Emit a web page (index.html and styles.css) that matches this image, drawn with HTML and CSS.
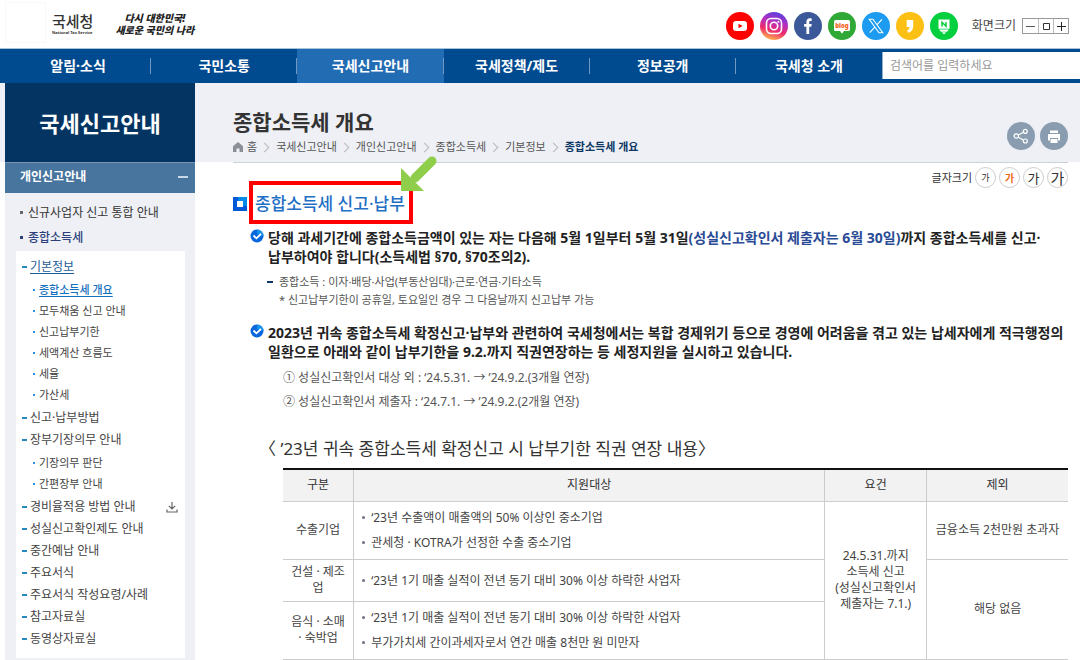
FILE: index.html
```html
<!DOCTYPE html>
<html lang="ko">
<head>
<meta charset="utf-8">
<meta name="viewport" content="width=device-width, initial-scale=1">
<title>종합소득세 개요 | 국세청</title>
<link rel="stylesheet" href="styles.css">
</head>
<body>
<header class="top">
  <a class="brand" href="#">
    <span class="emblem"></span>
    <span class="brand-text"><span class="brand-name">국세청</span><span class="brand-sub">National Tax Service</span></span>
  </a>
  <p class="slogan"><span class="slogan-first">다시 대한민국!</span><span>새로운 국민의 나라</span></p>
  <div class="social">
    <a href="#" aria-label="YouTube"><svg viewBox="0 0 28 28"><circle cx="14" cy="14" r="14" fill="#f00"/><rect x="7" y="9" width="14" height="10" rx="3" fill="#fff"/><path d="M12.5 11.7l4.2 2.3-4.2 2.3z" fill="#f00"/></svg></a>
    <a href="#" aria-label="Instagram"><svg viewBox="0 0 28 28"><defs><linearGradient id="ig" x1="0.6" y1="0" x2="0.3" y2="1"><stop offset="0" stop-color="#5a3fe0"/><stop offset=".35" stop-color="#b72fbe"/><stop offset=".65" stop-color="#ee2c6b"/><stop offset="1" stop-color="#fdc04e"/></linearGradient></defs><circle cx="14" cy="14" r="14" fill="url(#ig)"/><rect x="6.5" y="6.5" width="15" height="15" rx="4.5" fill="none" stroke="#fff" stroke-width="1.6"/><circle cx="14" cy="14" r="3.7" fill="none" stroke="#fff" stroke-width="1.6"/><circle cx="18.4" cy="9.7" r="1" fill="#fff"/></svg></a>
    <a href="#" aria-label="Facebook"><svg viewBox="0 0 28 28"><circle cx="14" cy="14" r="14" fill="#3b5998"/><path d="M12.4 22v-7.2h-2.3v-2.9h2.3V10c0-2.4 1.4-3.7 3.5-3.7.8 0 1.4.1 1.8.2V9h-1.3c-1 0-1.2.6-1.2 1.3v1.6h2.5l-.4 2.9h-2.1V22z" fill="#fff"/></svg></a>
    <a href="#" aria-label="네이버 블로그"><svg viewBox="0 0 28 28"><circle cx="14" cy="14" r="14" fill="#2fa836"/><path d="M7.500 8h13q1.500 0 1.500 1.500v8q0 1.500-1.500 1.500H16l-2 2.700-2-2.700H7.500Q6 19 6 17.500v-8Q6 8 7.500 8z" fill="#fff"/><text class="blog-mark" x="14" y="15.500" text-anchor="middle">blog</text></svg></a>
    <a href="#" aria-label="X"><svg viewBox="0 0 28 28"><circle cx="14" cy="14" r="14" fill="#1d9bf0"/><path d="M7.300 7.300h3.700l9.700 13.400H17zM20 7.300l-5.400 5.900M12.800 15.100l-5.100 5.600" fill="none" stroke="#fff" stroke-width="1.100"/></svg></a>
    <a href="#" aria-label="카카오스토리"><svg viewBox="0 0 28 28"><circle cx="14" cy="14" r="14" fill="#fcc014"/><path d="M10.700 8h6.500v6c0 3.600-1.800 6-5.100 6.800l-1-2.300c1.500-.6 2.300-1.600 2.400-3.500h-2.800z" fill="#fff"/></svg></a>
    <a href="#" aria-label="네이버 포스트"><svg viewBox="0 0 28 28"><circle cx="14" cy="14" r="14" fill="#04cf3f"/><path d="M8.500 7.500h11v9.300h-11zM9 17.500h10l-2 2.300h-6zM12 20.300h4l-2 2.200z" fill="#fff"/><path d="M12 14.500v-4.300l4 4v-4.300" fill="none" stroke="#04cf3f" stroke-width="1.500"/></svg></a>
  </div>
  <div class="zoom">
    <span>화면크기</span>
    <div class="zoom-buttons">
      <button type="button" aria-label="화면 축소"><svg viewBox="0 0 14 14"><path d="M3 7.500h9" stroke="#555"/></svg></button>
      <button type="button" aria-label="기본 크기"><svg viewBox="0 0 14 14"><path d="M4.500 4.500h6v6h-6z" fill="none" stroke="#333"/></svg></button>
      <button type="button" aria-label="화면 확대"><svg viewBox="0 0 14 14"><path d="M3 7.500h9M7.500 3v9" stroke="#222"/></svg></button>
    </div>
  </div>
</header>

<div class="bar">
  <nav class="menu">
    <a href="#">알림·소식</a>
    <a href="#">국민소통</a>
    <a href="#" class="on">국세신고안내</a>
    <a href="#">국세정책/제도</a>
    <a href="#">정보공개</a>
    <a href="#">국세청 소개</a>
  </nav>
  <form class="search"><input type="search" placeholder="검색어를 입력하세요" aria-label="검색어"></form>
</div>

<div class="page">
  <aside class="side">
    <h2 class="side-title">국세신고안내</h2>
    <button type="button" class="side-group">개인신고안내<span class="minus"></span></button>
    <ul class="side-list">
      <li><a href="#">신규사업자 신고 통합 안내</a></li>
      <li class="current"><a href="#">종합소득세</a></li>
    </ul>
    <ul class="tree">
      <li><a class="row open" href="#">기본정보</a>
        <ul class="leaf">
          <li class="here"><a href="#">종합소득세 개요</a></li>
          <li><a href="#">모두채움 신고 안내</a></li>
          <li><a href="#">신고납부기한</a></li>
          <li><a href="#">세액계산 흐름도</a></li>
          <li><a href="#">세율</a></li>
          <li><a href="#">가산세</a></li>
        </ul>
      </li>
      <li><a class="row" href="#">신고·납부방법</a></li>
      <li><a class="row" href="#">장부기장의무 안내</a>
        <ul class="leaf">
          <li><a href="#">기장의무 판단</a></li>
          <li><a href="#">간편장부 안내</a></li>
        </ul>
      </li>
      <li><a class="row" href="#">경비율적용 방법 안내<svg class="download" viewBox="0 0 12 12"><path d="M6 1v6.500M2.800 4.800L6 8l3.200-3.200M1 8.500v2.500h10V8.500" fill="none" stroke="#666" stroke-width="1.200"/></svg></a></li>
      <li><a class="row" href="#">성실신고확인제도 안내</a></li>
      <li><a class="row" href="#">중간예납 안내</a></li>
      <li><a class="row" href="#">주요서식</a></li>
      <li><a class="row" href="#">주요서식 작성요령/사례</a></li>
      <li><a class="row" href="#">참고자료실</a></li>
      <li><a class="row" href="#">동영상자료실</a></li>
    </ul>
  </aside>

  <main class="main">
    <div class="heading">
      <div class="heading-in">
        <div>
          <h1>종합소득세 개요</h1>
          <nav class="crumbs">
            <a href="#" class="home"><svg viewBox="0 0 10 10"><path d="M5 0l5 4.200V10H6.500V6.500h-3V10H0V4.200z" fill="#8c9096"/></svg>홈</a>
            <a href="#">국세신고안내</a>
            <a href="#">개인신고안내</a>
            <a href="#">종합소득세</a>
            <a href="#">기본정보</a>
            <strong>종합소득세 개요</strong>
          </nav>
        </div>
        <div class="tools">
          <button type="button" aria-label="공유"><svg viewBox="0 0 28 28"><path d="M9.300 14l8.700-4.500M9.300 14l8.700 5" fill="none" stroke="#fff" stroke-width="1.200"/><g fill="#8a9db0" stroke="#fff" stroke-width="1.200"><circle cx="9.300" cy="14" r="2.200"/><circle cx="18.300" cy="9.300" r="2"/><circle cx="18.300" cy="19" r="2"/></g></svg></button>
          <button type="button" aria-label="인쇄"><svg viewBox="0 0 28 28"><path d="M10 8.500h8V11h-8zM8 12h12v6.500h-2V16h-8v2.500H8zM10.500 17h7v4h-7z" fill="#fff"/></svg></button>
        </div>
      </div>
    </div>

    <div class="content">
      <div class="fontsize">
        <span>글자크기</span>
        <button type="button" class="s1">가</button>
        <button type="button" class="s2">가</button>
        <button type="button" class="s3">가</button>
        <button type="button" class="s4">가</button>
      </div>

      <div class="section-title">
        <svg class="square" viewBox="0 0 14 14"><path d="M0 0h14v14H0z" fill="#0059d6"/><path d="M5 0h9v9h-4V4H5z" fill="#008be8"/><path d="M4 4h6v6H4z" fill="#fff"/></svg>
        <h2>종합소득세 신고·납부
          <svg class="arrow" viewBox="0 0 38 36"><path d="M31 5L14 22" stroke="#8fce4a" stroke-width="9" stroke-linecap="round"/><path d="M0 12l23 23H0z" fill="#8fce4a"/></svg>
        </h2>
      </div>

      <section class="point">
        <svg class="check" viewBox="0 0 14 14"><circle cx="7" cy="7" r="6.500" fill="#0867dc"/><path d="M7 .5A6.500 6.500 0 0 1 13.500 7L7 5z" fill="#1593ea"/><path d="M3.500 6.500L6.400 9.300 11 5" fill="none" stroke="#fff" stroke-width="1.800"/></svg>
        <div>
          <h3>당해 과세기간에 종합소득금액이 있는 자는 다음해 5월 1일부터 5월 31일<em>(성실신고확인서 제출자는 6월 30일)</em>까지 종합소득세를 신고·<br>납부하여야 합니다(소득세법 §70, §70조의2).</h3>
          <div class="dash">
            <p>종합소득 : 이자·배당·사업(부동산임대)·근로·연금·기타소득</p>
            <p>* 신고납부기한이 공휴일, 토요일인 경우 그 다음날까지 신고납부 가능</p>
          </div>
        </div>
      </section>

      <section class="point">
        <svg class="check" viewBox="0 0 14 14"><circle cx="7" cy="7" r="6.500" fill="#0867dc"/><path d="M7 .5A6.500 6.500 0 0 1 13.500 7L7 5z" fill="#1593ea"/><path d="M3.500 6.500L6.400 9.300 11 5" fill="none" stroke="#fff" stroke-width="1.800"/></svg>
        <div>
          <h3>2023년 귀속 종합소득세 확정신고·납부와 관련하여 국세청에서는 복합 경제위기 등으로 경영에 어려움을 겪고 있는 납세자에게 적극행정의 일환으로 아래와 같이 납부기한을 9.2.까지 직권연장하는 등 세정지원을 실시하고 있습니다.</h3>
          <ul class="terms">
            <li>① 성실신고확인서 대상 외 : ‘24.5.31. → ’24.9.2.(3개월 연장)</li>
            <li>② 성실신고확인서 제출자 : ‘24.7.1. → ’24.9.2.(2개월 연장)</li>
          </ul>
        </div>
      </section>

      <table class="grid">
        <caption>〈 ’23년 귀속 종합소득세 확정신고 시 납부기한 직권 연장 내용〉</caption>
        <colgroup><col class="c1"><col class="c2"><col class="c3"><col class="c4"></colgroup>
        <thead><tr><th scope="col">구분</th><th scope="col">지원대상</th><th scope="col">요건</th><th scope="col">제외</th></tr></thead>
        <tbody>
          <tr class="tall">
            <td>수출기업</td>
            <td class="list"><ul><li>‘23년 수출액이 매출액의 50% 이상인 중소기업</li><li>관세청 · KOTRA가 선정한 수출 중소기업</li></ul></td>
            <td rowspan="3">24.5.31.까지<br>소득세 신고<br>(성실신고확인서<br>제출자는 7.1.)</td>
            <td>금융소득 2천만원 초과자</td>
          </tr>
          <tr class="short">
            <td>건설 · 제조<br>업</td>
            <td class="list"><ul><li>‘23년 1기 매출 실적이 전년 동기 대비 30% 이상 하락한 사업자</li></ul></td>
            <td rowspan="2">해당 없음</td>
          </tr>
          <tr class="tall">
            <td>음식 · 소매<br>· 숙박업</td>
            <td class="list"><ul><li>‘23년 1기 매출 실적이 전년 동기 대비 30% 이상 하락한 사업자</li><li>부가가치세 간이과세자로서 연간 매출 8천만 원 미만자</li></ul></td>
          </tr>
        </tbody>
      </table>
    </div>
  </main>
</div>
</body>
</html>
```

FILE: styles.css
```css
* { box-sizing: border-box; }

body {
  margin: 0;
  min-height: 100vh;
  display: flex;
  flex-direction: column;
  background: #fff;
  color: #444;
  font: 12px/16px "Noto Sans", "Noto Sans CJK KR", sans-serif;
  word-break: keep-all;
}

h1, h2, h3, p, ul { margin: 0; padding: 0; }
ul { list-style: none; }
a { color: inherit; text-decoration: none; }
button { font: inherit; color: inherit; padding: 0; cursor: pointer; }
svg { display: block; }

/* top strip */
.top { display: flex; align-items: center; height: 48px; padding: 0 11px 0 5px; }
.brand { display: flex; align-items: center; gap: 6px; padding-bottom: 4px; }
.emblem { width: 41px; height: 41px; border: 1px solid #f8f8f8; }
.brand-text { display: flex; flex-direction: column; padding-top: 4px; }
.brand-name { font-size: 15px; line-height: 18px; font-weight: 500; color: #333; }
.brand-sub { font-size: 4px; line-height: 6px; font-weight: 700; color: #333; }
.slogan {
  display: flex;
  flex-direction: column;
  align-items: center;
  margin-left: 22px;
  font-size: 10px;
  line-height: 12px;
  font-weight: 900;
  font-style: italic;
  color: #222;
}
.social { display: flex; gap: 6px; margin-left: auto; padding-top: 4px; }
.social svg { width: 28px; height: 28px; }
.blog-mark { font: 900 6px "Noto Sans", sans-serif; fill: #f26522; }
.zoom { display: flex; align-items: center; gap: 6px; margin-left: 14px; padding-top: 4px; }
.zoom-buttons { display: flex; border: 1px solid #999; }
.zoom-buttons button { width: 15px; height: 14px; border: 0; background: #fff; }
.zoom-buttons button + button { border-left: 1px solid #bbb; }
.zoom-buttons svg { width: 14px; height: 14px; }

/* main menu */
.bar { display: flex; height: 35px; padding-left: 5px; background: #004a8f; border-top: 1px solid #a9c3dc; }
.menu { flex: 877; display: grid; grid-template-columns: repeat(6, 1fr); }
.menu a {
  position: relative;
  display: flex;
  align-items: center;
  justify-content: center;
  color: #fff;
  font-size: 14px;
  font-weight: 700;
}
.menu a:not(:last-child)::after {
  content: "";
  position: absolute;
  right: 0;
  top: 9px;
  height: 16px;
  border-right: 1px solid #6f98c2;
}
.menu .on { background: #226cb3; }
.search { flex: 198; padding: 3px 0 4px; }
.search input {
  width: 100%;
  height: 27px;
  padding: 0 7px;
  border: 0;
  border-left: 1px solid #8fb0d0;
  border-radius: 0;
  background: #fff;
  font: inherit;
  outline: 0;
}
.search input::placeholder { color: #999; }

.page { flex: 1; display: flex; }

/* side navigation */
.side {
  flex: 0 0 195px;
  padding: 0 0 4px 5px;
  background:
    linear-gradient(#eef0f5, #eef0f5) 0 0 / 5px 79px no-repeat,
    linear-gradient(#eef0f5, #eef0f5) 5px 0 no-repeat;
}
.side-title {
  display: flex;
  align-items: center;
  justify-content: center;
  height: 79px;
  background: #043562;
  color: #fff;
  font-size: 22px;
  line-height: 30px;
}
.side-group {
  display: flex;
  align-items: center;
  justify-content: space-between;
  width: 100%;
  height: 31px;
  padding: 0 7px 2px 15px;
  border: 0;
  border-top: 1px solid #7895b3;
  background: #48759e;
  color: #fff;
  font-weight: 700;
}
.minus { width: 10px; height: 2px; background: #c9d8e6; }
.side-list { padding: 7px 0 1px 15px; }
.side-list li { display: flex; align-items: center; gap: 5px; height: 25px; color: #333; }
.side-list li::before { content: ""; width: 3px; height: 3px; background: #666; }
.side-list .current { color: #2c3f7c; font-weight: 500; }
.side-list .current::before { background: #2c3f7c; }
.tree { margin: 0 10px 0 11px; padding: 5px 0 8px 6px; background: #fff; }
.row { display: flex; align-items: center; gap: 3px; height: 22px; color: #444; }
.row::before { content: ""; width: 5px; height: 2px; background: #2589bd; }
.open { color: #1d5c96; text-decoration: underline; text-underline-offset: 2px; }
.download { width: 12px; height: 12px; margin: 0 7px 0 auto; }
.leaf { padding: 1px 0 2px 11px; font-size: 11px; }
.leaf li { display: flex; align-items: center; gap: 4px; height: 21px; }
.leaf li::before { content: ""; width: 2px; height: 2px; background: #2b8de0; }
.here a { color: #1470bd; font-weight: 500; text-decoration: underline; text-underline-offset: 2px; }

/* page heading */
.main { flex: 1; min-width: 0; }
.heading { height: 79px; padding: 0 12px 0 38px; background: #eef0f5; }
.heading-in { display: flex; justify-content: space-between; height: 80px; padding-top: 24px; border-bottom: 1px solid #cdd1d8; }
h1 { font-size: 21px; line-height: 30px; color: #333; }
.crumbs { display: flex; align-items: center; padding-top: 2px; font-size: 11px; color: #555; }
.crumbs > * { display: flex; align-items: center; }
.crumbs > * + *::before {
  content: "";
  width: 6px;
  height: 6px;
  margin: 0 8px 0 4px;
  border: solid #b4b8be;
  border-width: 1px 1px 0 0;
  transform: rotate(45deg);
}
.crumbs strong { color: #0d3765; }
.home { gap: 4px; }
.home svg { width: 10px; height: 10px; }
.tools { display: flex; gap: 5px; padding-top: 15px; }
.tools button { width: 28px; height: 28px; border: 0; border-radius: 50%; background: #8a9db0; }

/* article */
.content { padding: 5px 12px 0 38px; }
.fontsize { display: flex; align-items: center; justify-content: flex-end; gap: 3px; font-size: 11px; color: #333; }
.fontsize button {
  display: flex;
  align-items: center;
  justify-content: center;
  width: 21px;
  height: 21px;
  border: 1px solid #ccc;
  border-radius: 50%;
  background: #fff;
}
.fontsize .s1 { font-size: 9px; }
.fontsize .s2 { font-size: 10px; font-weight: 700; color: #f26a1b; }
.fontsize .s3 { font-size: 13px; }
.fontsize .s4 { font-size: 15px; }

.section-title { display: flex; align-items: center; gap: 2px; margin-top: -7px; }
.square { width: 14px; height: 14px; margin-top: 3px; }
.section-title h2 {
  position: relative;
  height: 43px;
  padding: 6px 4px 0 2px;
  border: 4px solid #f00;
  font-size: 17px;
  line-height: 26px;
  font-weight: 500;
  color: #1f6fc5;
}
.arrow { position: absolute; right: -30px; top: -29px; width: 38px; height: 36px; }

.point { display: flex; gap: 4px; padding-left: 17px; margin-top: 4px; }
.point + .point { margin-top: 14px; }
.check { flex: none; width: 14px; height: 14px; margin-top: 1px; }
.point h3 { font-size: 14px; line-height: 19px; color: #222; }
.point em { font-style: normal; color: #2a4b96; }
.dash { position: relative; padding: 7px 0 0 11px; font-size: 11px; line-height: 18px; color: #555; }
.dash::before { content: ""; position: absolute; left: -1px; top: 15px; width: 6px; height: 2px; background: #0d3765; }
.terms { padding: 5px 0 0 15px; line-height: 24px; color: #555; }

.grid {
  width: calc(100% - 50px);
  margin: 22px 0 0 50px;
  border-collapse: collapse;
  table-layout: fixed;
  text-align: center;
}
.grid caption { margin-left: -24px; padding-bottom: 6px; text-align: left; font-size: 17px; line-height: 26px; color: #333; }
.c1 { width: 9%; }
.c2 { width: 60%; }
.c3 { width: 13%; }
.c4 { width: 18%; }
.grid thead { border-top: 2px solid #111; }
.grid th { height: 32px; padding: 0; background: #f2f2f2; font-weight: 400; color: #333; }
.grid th, .grid td { border-bottom: 1px solid #ccc; border-left: 1px solid #ccc; }
.grid th:first-child, .grid tr > td:first-child { border-left: 0; }
.grid td { padding: 3px 2px; }
.grid .tall { height: 58px; }
.grid .short { height: 42px; }
.grid .list { padding: 3px 8px; text-align: left; }
.list li { display: flex; align-items: center; gap: 6px; line-height: 25px; }
.list li::before { content: ""; width: 3px; height: 3px; border-radius: 50%; background: #6b7280; }
```
